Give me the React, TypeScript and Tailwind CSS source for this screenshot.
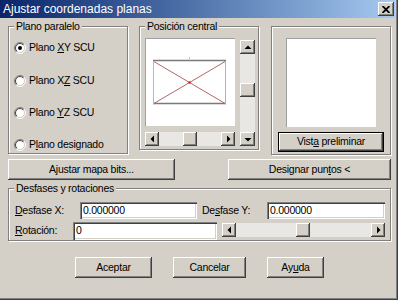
import React from 'react';

// Cuadro de diálogo estilo Windows 2000
const raised =
  'bg-[#d4d0c8] shadow-[inset_-1px_-1px_#404040,inset_1px_1px_#ffffff,inset_-2px_-2px_#808080,inset_2px_2px_#d4d0c8]';
const sunken =
  'bg-white shadow-[inset_1px_1px_#808080,inset_2px_2px_#404040,inset_-1px_-1px_#ffffff,inset_-2px_-2px_#d4d0c8]';
const etched = 'relative border border-[#808080] shadow-[inset_1px_1px_#ffffff,1px_1px_#ffffff]';

const U = ({ children }: { children: React.ReactNode }) => (
  <span className="underline underline-offset-[1px]">{children}</span>
);

const Arrow = ({ dir }: { dir: 'up' | 'down' | 'left' | 'right' }) => {
  const pts = {
    up: '0.5,5 7.5,5 4,1.5',
    down: '0.5,2 7.5,2 4,5.5',
    left: '5,0.5 5,7.5 1.5,4',
    right: '2,0.5 2,7.5 5.5,4',
  }[dir];
  const w = dir === 'up' || dir === 'down' ? 8 : 7;
  const h = dir === 'up' || dir === 'down' ? 7 : 8;
  return (
    <svg width={w} height={h} viewBox={`0 0 ${w} ${h}`}>
      <polygon points={pts} fill="#000" />
    </svg>
  );
};

const ArrowBtn = ({ dir, className = '' }: { dir: 'up' | 'down' | 'left' | 'right'; className?: string }) => (
  <div className={`${raised} flex items-center justify-center shrink-0 ${className}`}>
    <Arrow dir={dir} />
  </div>
);

const HScroll = ({ width, thumb }: { width: string; thumb: string }) => (
  <div className={`flex h-[14px] ${width}`}>
    <ArrowBtn dir="left" className="w-[14px] h-[14px]" />
    <div className={`flex-1 bg-[#e9e7e3] ${thumb}`}>
      <div className={`${raised} w-[14px] h-[14px]`} />
    </div>
    <ArrowBtn dir="right" className="w-[14px] h-[14px]" />
  </div>
);

const Radio = ({ checked }: { checked?: boolean }) => (
  <svg width="12" height="12" viewBox="0 0 12 12" className="shrink-0">
    <defs>
      <linearGradient id="ro" x1="0" y1="0" x2="1" y2="1">
        <stop offset="0.5" stopColor="#808080" />
        <stop offset="0.5" stopColor="#ffffff" />
      </linearGradient>
      <linearGradient id="ri" x1="0" y1="0" x2="1" y2="1">
        <stop offset="0.5" stopColor="#404040" />
        <stop offset="0.5" stopColor="#d4d0c8" />
      </linearGradient>
    </defs>
    <circle cx="6" cy="6" r="5.5" fill="none" stroke="url(#ro)" />
    <circle cx="6" cy="6" r="4.5" fill="#fff" stroke="url(#ri)" />
    {checked && <circle cx="6" cy="6" r="2" fill="#000" />}
  </svg>
);

const Legend = ({ children }: { children: React.ReactNode }) => (
  <span className="absolute left-[5px] top-[-7px] px-[2px] bg-[#d4d0c8] leading-[13px]">{children}</span>
);

const Btn = ({ className = '', children }: { className?: string; children: React.ReactNode }) => (
  <div className={`${raised} h-[21px] flex items-center justify-center ${className}`}>
    <span>{children}</span>
  </div>
);

export default function App() {
  return (
    <div
      className="w-[398px] h-[300px] bg-[#d4d0c8] flex flex-col pr-[3px] pb-[3px] shadow-[inset_-1px_-1px_#404040,inset_-2px_-2px_#808080] text-black text-[10.5px] tracking-[-0.25px] overflow-hidden"
      style={{ fontFamily: '"Liberation Sans", Arial, sans-serif' }}
    >
      {/* Barra de título */}
      <div className="h-[18px] shrink-0 flex items-center justify-between pl-[3px] pr-[1px] bg-linear-to-r from-[#0a246a] to-[#a6caf0]">
        <span className="text-white text-[12px] tracking-[0px] leading-none">Ajustar coordenadas planas</span>
        <div className={`${raised} w-[16px] h-[14px] flex items-center justify-center`}>
          <svg width="8" height="7" viewBox="0 0 8 7">
            <path d="M0.5 0 L7.5 7 M7.5 0 L0.5 7" stroke="#000" strokeWidth="1.8" />
          </svg>
        </div>
      </div>

      <div className="flex-1 flex flex-col pl-[8px] pr-[4px]">
        {/* Fila de grupos */}
        <div className="mt-[8px] flex items-start">
          <div className={`${etched} w-[120px] h-[128px] flex flex-col pt-[14px] pl-[5px]`}>
            <Legend>Plano paralelo</Legend>
            {[
              [<>Plano <U>X</U>Y SCU</>, true],
              [<>Plano X<U>Z</U> SCU</>, false],
              [<>Plano <U>Y</U>Z SCU</>, false],
              [<>P<U>l</U>ano designado</>, false],
            ].map(([label, checked], i) => (
              <div key={i} className={`h-[13px] flex items-center ${i === 0 ? '' : i === 1 ? 'mt-[20px]' : 'mt-[19px]'}`}>
                <Radio checked={checked as boolean} />
                <span className="ml-[3px] leading-none">{label as React.ReactNode}</span>
              </div>
            ))}
          </div>

          <div className={`${etched} ml-[11px] w-[120px] h-[124px] flex pt-[11px] pl-[5px]`}>
            <Legend>Posición central</Legend>
            <div className="flex flex-col w-[90px]">
              <div className="w-[90px] h-[88px] bg-white border-t border-l border-[#a0a0a0]">
                <svg width="89" height="87" viewBox="1 1 89 87">
                  <line x1="44.5" y1="19" x2="44.5" y2="21" stroke="#b8c8b8" />
                  <line x1="8" y1="23" x2="81" y2="66" stroke="#b06868" />
                  <line x1="81" y1="23" x2="8" y2="66" stroke="#b06868" />
                  <line x1="8" y1="22.5" x2="81" y2="22.5" stroke="#7a7a7a" strokeWidth="1.5" />
                  <line x1="8" y1="65.5" x2="81" y2="65.5" stroke="#7a7a7a" strokeWidth="1.5" />
                  <line x1="8.5" y1="23" x2="8.5" y2="66" stroke="#70d8d0" />
                  <line x1="80.5" y1="23" x2="80.5" y2="66" stroke="#70d890" />
                  <circle cx="44.5" cy="44.5" r="1.2" fill="#d02020" />
                </svg>
              </div>
              <div className="mt-[6px]">
                <HScroll width="w-[90px]" thumb="pl-[24px]" />
              </div>
            </div>
            <div className="ml-[5px] mt-[2px] w-[15px] h-[106px] flex flex-col">
              <ArrowBtn dir="up" className="w-[15px] h-[14px]" />
              <div className="flex-1 bg-[#e9e7e3] pt-[29px]">
                <div className={`${raised} w-[15px] h-[14px]`} />
              </div>
              <ArrowBtn dir="down" className="w-[15px] h-[14px]" />
            </div>
          </div>

          <div className={`${etched} ml-[12px] w-[120px] h-[129px] flex flex-col items-center pt-[11px]`}>
            <div className="w-[90px] h-[89px] bg-white border-t border-l border-[#a0a0a0]" />
            <div className="mt-[5px] w-[106px] h-[20px] border border-black">
              <div className={`${raised} w-full h-full flex items-center justify-center`}>
                <span>Vist<U>a</U> preliminar</span>
              </div>
            </div>
          </div>
        </div>

        {/* Botones */}
        <div className="mt-[4px] flex">
          <Btn className="w-[167px]">Ajustar mapa bits...</Btn>
          <Btn className="ml-auto w-[163px]">Designar pun<U>t</U>os &lt;</Btn>
        </div>

        {/* Desfases y rotaciones */}
        <div className={`${etched} mt-[8px] h-[53px] flex flex-col pt-[13px] pl-[6px]`}>
          <Legend>Desfases y rotaciones</Legend>
          <div className="flex items-center">
            <span className="w-[65px]"><U>D</U>esfase X:</span>
            <div className={`${sunken} w-[117px] h-[17px] flex items-center pl-[3px]`}>0.000000</div>
            <span className="ml-[5px] w-[65px]">De<U>s</U>fase Y:</span>
            <div className={`${sunken} w-[118px] h-[17px] flex items-center pl-[3px]`}>0.000000</div>
          </div>
          <div className="mt-[3px] flex items-start">
            <span className="w-[58px] h-[18px] flex items-center"><span><U>R</U>otación:</span></span>
            <div className={`${sunken} w-[144px] h-[18px] flex items-center pl-[3px]`}>0</div>
            <div className="ml-[5px] mt-[1px]">
              <HScroll width="w-[163px]" thumb="pl-[60px]" />
            </div>
          </div>
        </div>

        {/* Aceptar / Cancelar / Ayuda */}
        <div className="mt-[16px] flex pl-[67px]">
          <Btn className="w-[77px]">Aceptar</Btn>
          <Btn className="ml-[21px] w-[73px]">Cancelar</Btn>
          <Btn className="ml-[21px] w-[57px]">Ay<U>u</U>da</Btn>
        </div>
      </div>
    </div>
  );
}
